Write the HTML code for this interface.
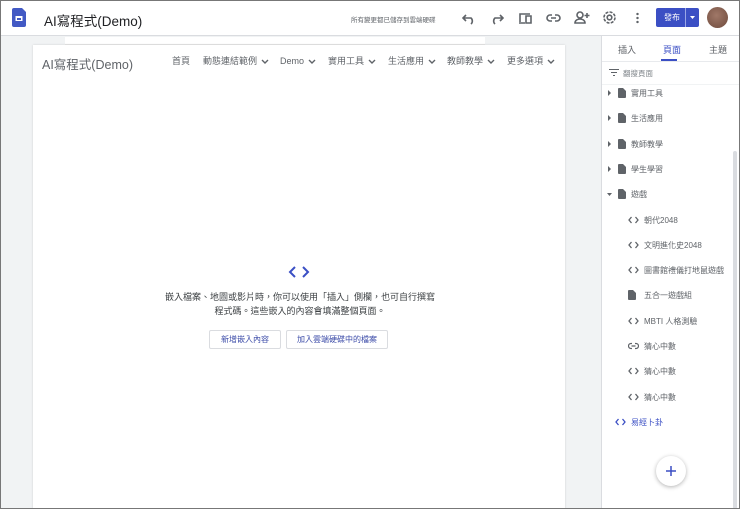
<!DOCTYPE html><html><head><meta charset="utf-8"><style>
*{margin:0;padding:0;box-sizing:border-box}
body{width:740px;height:509px;overflow:hidden;font-family:"Liberation Sans","Noto Sans CJK TC",sans-serif;background:#f1f3f4;position:relative;color:#3c4043}
svg{display:block}
.frame{position:absolute;inset:0;border:1px solid #777;pointer-events:none;z-index:9}
.top{position:absolute;left:0;top:0;width:740px;height:36px;background:#fff;border-bottom:1px solid #dadce0}
.abs{position:absolute}
.ic{position:absolute;stroke:#5f6368;fill:none;stroke-width:1.6}
.canvas{position:absolute;left:33px;top:45px;width:532px;height:464px;background:#fff;box-shadow:0 0 2px rgba(0,0,0,.15)}
.nav{position:absolute;top:55px;font-size:9px;color:#5f6368;display:flex;align-items:center;gap:4px;height:12px;line-height:12px;white-space:nowrap}
.side{position:absolute;left:601px;top:36px;width:139px;height:473px;background:#fff;border-left:1px solid #dadce0}
.row{position:absolute;display:flex;align-items:center;height:12px;font-size:8px;color:#5f6368}
.btn{position:absolute;top:330px;height:19px;border:1px solid #dadce0;border-radius:2px;font-size:8px;color:#3b4ba8;text-align:center;line-height:17px}
</style></head><body>
<div class="top">
 <svg class="abs" style="left:12px;top:8px" width="14" height="19"><path d="M0 2a2 2 0 0 1 2-2h8l4 4v13a2 2 0 0 1-2 2H2a2 2 0 0 1-2-2z" fill="#4259c4"/><rect x="3.5" y="8" width="7" height="5" fill="#fff"/><rect x="5" y="10" width="4" height="2" fill="#4259c4"/></svg>
 <div class="abs" style="left:44px;top:10px;font-size:13.5px;color:#202124">AI寫程式(Demo)</div>
 <div class="abs" style="left:351px;top:14px;font-size:6.5px;color:#5f6368">所有變更都已儲存到雲端硬碟</div>
 <svg class="ic" style="left:462px;top:11px" width="14" height="14"><path d="M4 4 1 7l3 3M1 7h8a4 4 0 0 1 0 6"/></svg>
 <svg class="ic" style="left:490px;top:11px" width="14" height="14"><path d="M10 4l3 3-3 3M13 7H5a4 4 0 0 0 0 6"/></svg>
 <svg class="ic" style="left:518px;top:11px" width="15" height="14"><path d="M2 11V3h10M1 12h6M8 5h5v7H8z"/></svg>
 <svg class="ic" style="left:546px;top:11px" width="15" height="14"><path d="M6 4H4a3 3 0 0 0 0 6h2M9 4h2a3 3 0 0 1 0 6H9M5 7h5"/></svg>
 <svg class="ic" style="left:574px;top:10px" width="16" height="15"><circle cx="6" cy="5" r="3"/><path d="M1 13c0-3 3-4 5-4s5 1 5 4zM13 3v5M10.5 5.5h5"/></svg>
 <svg class="ic" style="left:602px;top:10px" width="15" height="15"><circle cx="7.5" cy="7.5" r="2.3"/><circle cx="7.5" cy="7.5" r="5.5" stroke-dasharray="3 1.3"/></svg>
 <div class="abs" style="left:636px;top:12px;width:3px;height:12px;background:radial-gradient(circle,#5f6368 1.2px,transparent 1.3px) 0 0/3px 4px"></div>
 <div class="abs" style="left:656px;top:8px;width:43px;height:19px;background:#3b4fc4;border-radius:2px;color:#fff;font-size:8px;line-height:19px;padding-left:8px">發布<span style="position:absolute;left:29px;top:0;width:1px;height:19px;background:#9aa6e6"></span><svg style="position:absolute;left:34px;top:8px" width="5" height="3"><path d="M0 0h5L2.5 3z" fill="#fff"/></svg></div>
 <div class="abs" style="left:707px;top:7px;width:21px;height:21px;border-radius:50%;background:radial-gradient(circle at 45% 40%,#a07868,#6e4a3c)"></div>
</div>
<div class="abs" style="left:65px;top:37px;width:420px;height:8px;background:#fff;border-bottom:1px solid #e8e8e8"></div>
<div class="canvas"></div>
<div class="abs" style="left:42px;top:54px;font-size:12.5px;color:#5f6368">AI寫程式(Demo)</div>
<div class="nav" style="left:172px">首頁</div>
<div class="nav" style="left:203px">動態連結範例<svg width="8" height="5" fill="none" stroke="#5f6368" stroke-width="1.4"><path d="M1 1l3 3 3-3"/></svg></div>
<div class="nav" style="left:280px">Demo<svg width="8" height="5" fill="none" stroke="#5f6368" stroke-width="1.4"><path d="M1 1l3 3 3-3"/></svg></div>
<div class="nav" style="left:328px">實用工具<svg width="8" height="5" fill="none" stroke="#5f6368" stroke-width="1.4"><path d="M1 1l3 3 3-3"/></svg></div>
<div class="nav" style="left:388px">生活應用<svg width="8" height="5" fill="none" stroke="#5f6368" stroke-width="1.4"><path d="M1 1l3 3 3-3"/></svg></div>
<div class="nav" style="left:447px">教師教學<svg width="8" height="5" fill="none" stroke="#5f6368" stroke-width="1.4"><path d="M1 1l3 3 3-3"/></svg></div>
<div class="nav" style="left:507px">更多選項<svg width="8" height="5" fill="none" stroke="#5f6368" stroke-width="1.4"><path d="M1 1l3 3 3-3"/></svg></div>
<svg class="abs" style="left:288px;top:265px" width="22" height="14" fill="none" stroke="#3b4fc4" stroke-width="2"><path d="M7 2 2 7l5 5M15 2l5 5-5 5"/></svg>
<div class="abs" style="left:150px;top:291px;width:300px;text-align:center;font-size:9px;line-height:13.5px;color:#3c4043">嵌入檔案、地圖或影片時，你可以使用「插入」側欄，也可自行撰寫<br>程式碼。這些嵌入的內容會填滿整個頁面。</div>
<div class="btn" style="left:209px;width:72px">新增嵌入內容</div>
<div class="btn" style="left:286px;width:102px">加入雲端硬碟中的檔案</div>
<div class="side">
 <div class="abs" style="left:16px;top:7px;font-size:9px;color:#5f6368">插入</div>
 <div class="abs" style="left:61px;top:7px;font-size:9px;color:#3b4fc4">頁面</div>
 <div class="abs" style="left:107px;top:7px;font-size:9px;color:#5f6368">主題</div>
 <div class="abs" style="left:59px;top:23px;width:16px;height:2px;background:#3b4fc4"></div>
 <div class="abs" style="left:0;top:25px;width:139px;height:1px;background:#e8eaed"></div>
 <svg class="abs" style="left:7px;top:33px" width="10" height="7" stroke="#5f6368" stroke-width="1.1"><path d="M0 .5h10M2 3.5h6M4 6.5h2"/></svg>
 <div class="abs" style="left:21px;top:32px;font-size:7.5px;color:#80868b">翻搜頁面</div>
 <div class="abs" style="left:0;top:48px;width:139px;height:1px;background:#f1f3f4"></div>
 <div class="abs" style="left:131px;top:115px;width:4px;height:358px;background:#dadce0;border-radius:2px"></div>
</div>
<div id="items"></div>
<script>
var doc='<svg width="8" height="10"><path d="M0 1a1 1 0 0 1 1-1h4l3 3v6a1 1 0 0 1-1 1H1a1 1 0 0 1-1-1z" fill="#5f6368"/></svg>';
var code=c=>'<svg width="11" height="8" fill="none" stroke="'+c+'" stroke-width="1.3"><path d="M3.5 1 1 4l2.5 3M7.5 1 10 4 7.5 7"/></svg>';
var link='<svg width="11" height="8" fill="none" stroke="#5f6368" stroke-width="1.2"><path d="M4 1.5H3a2.5 2.5 0 0 0 0 5h1M7 1.5h1a2.5 2.5 0 0 1 0 5H7M3.5 4h4"/></svg>';
var tri=d=>d?'<svg width="5" height="5"><path d="M0 1h5L2.5 4z" fill="#5f6368"/></svg>':'<svg width="5" height="6"><path d="M1 0v6l3-3z" fill="#5f6368"/></svg>';
var rows=[[93,tri(0),doc,'實用工具',0],[118,tri(0),doc,'生活應用',0],[144,tri(0),doc,'教師教學',0],[169,tri(0),doc,'學生學習',0],[194,tri(1),doc,'遊戲',0],
[220,'',code('#5f6368'),'朝代2048',1],[245,'',code('#5f6368'),'文明進化史2048',1],[270,'',code('#5f6368'),'圖書館禮儀打地鼠遊戲',1],[295,'',doc,'五合一遊戲組',1],[321,'',code('#5f6368'),'MBTI 人格測驗',1],[346,'',link,'猜心中數',1],[371,'',code('#5f6368'),'猜心中數',1],[397,'',code('#5f6368'),'猜心中數',1],[422,'',code('#3b4fc4'),'易經卜卦',2]];
var h='';rows.forEach(r=>{var t=r[0]-6;
if(r[4]==0){h+='<div class="row" style="left:607px;top:'+t+'px">'+r[1]+'</div><div class="row" style="left:618px;top:'+t+'px">'+r[2]+'<span style="margin-left:5px">'+r[3]+'</span></div>';}
else if(r[4]==1){h+='<div class="row" style="left:628px;top:'+t+'px">'+r[2]+'<span style="position:absolute;left:16px;white-space:nowrap">'+r[3]+'</span></div>';}
else{h+='<div class="row" style="left:615px;top:'+t+'px;color:#3b4fc4">'+r[2]+'<span style="position:absolute;left:16px;white-space:nowrap">'+r[3]+'</span></div>';}
});
document.getElementById('items').innerHTML=h;
</script>
<div class="abs" style="left:656px;top:456px;width:30px;height:30px;border-radius:50%;background:#fff;box-shadow:0 1px 4px rgba(0,0,0,.3)"><svg style="position:absolute;left:10px;top:10px" width="10" height="10" stroke="#3b4fc4" stroke-width="1.5"><path d="M5 0v10M0 5h10"/></svg></div>
<div class="frame"></div>
</body></html>
